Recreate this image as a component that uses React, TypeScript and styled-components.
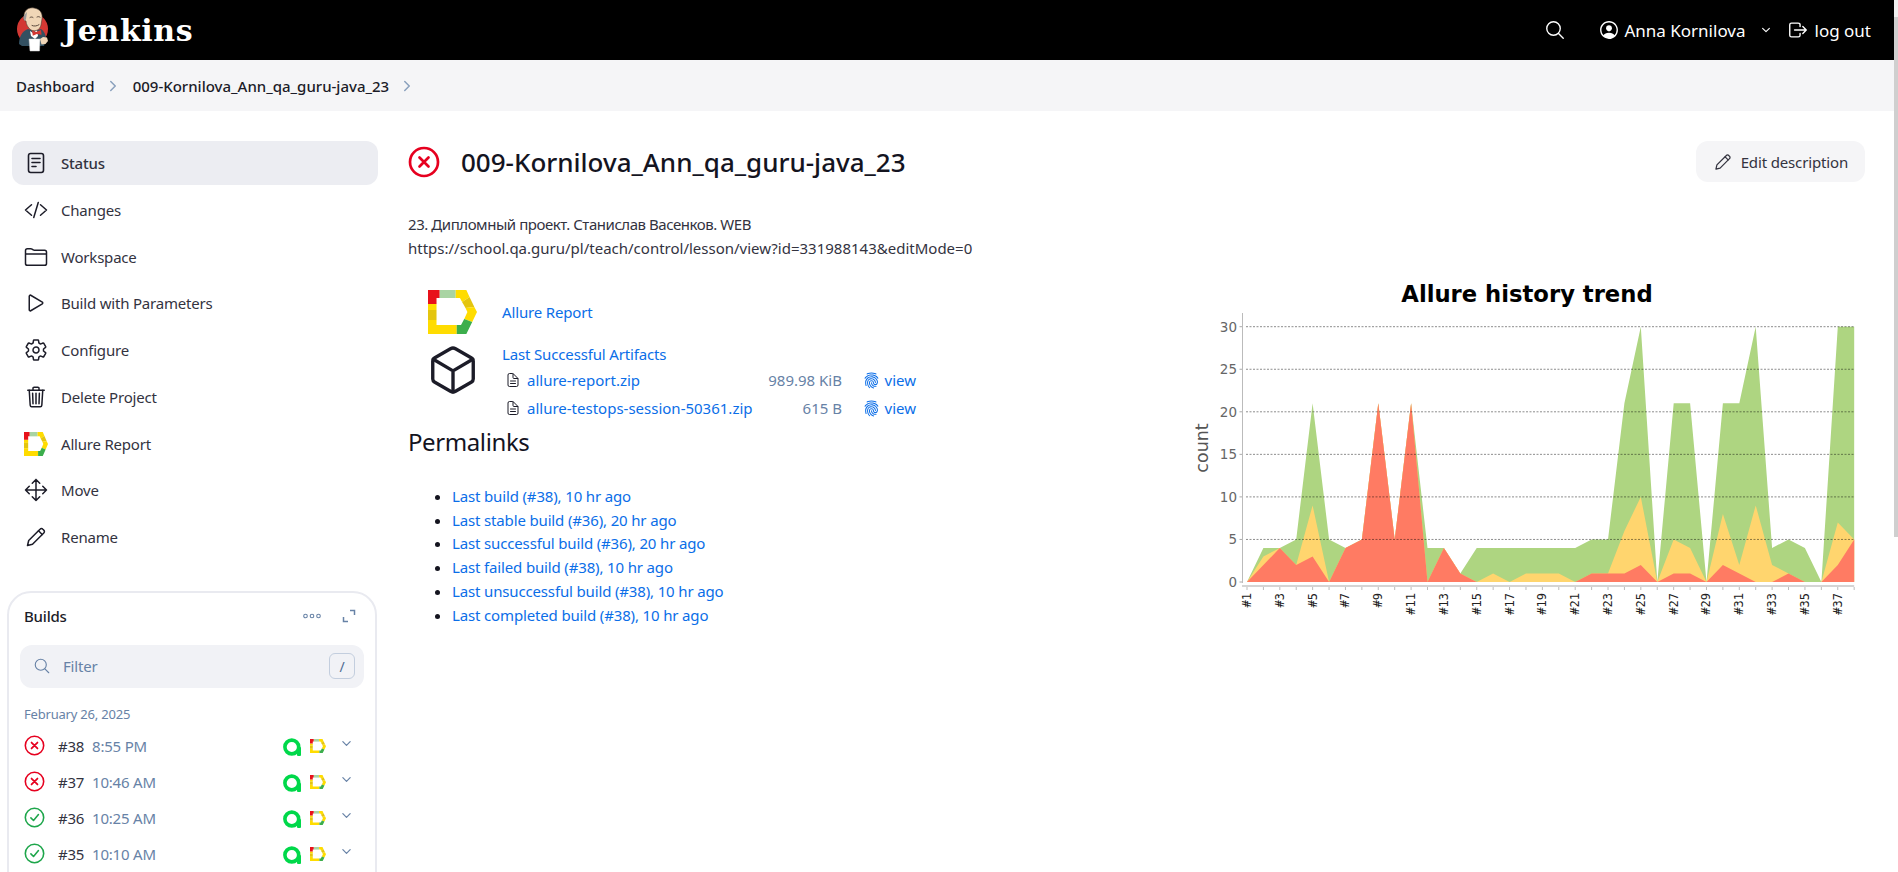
import React from "react";
import styled, { createGlobalStyle } from "styled-components";
import {
    IoChevronDown,
    IoChevronForward,
    IoCodeSlashOutline,
    IoCubeOutline,
    IoDocumentTextOutline,
    IoFingerPrint,
    IoFolderOutline,
    IoLogOutOutline,
    IoMoveOutline,
    IoPersonCircleOutline,
    IoPlayOutline,
    IoSearchOutline,
    IoSettingsOutline,
    IoTrashOutline,
} from "react-icons/io5";

const GlobalStyle = createGlobalStyle`
    html, body {
        margin: 0;
        height: 872px;
        overflow: hidden;
        background: #fff;
    }
    body {
        font-family: "Noto Sans", "Liberation Sans", sans-serif;
        font-size: 15px;
        color: #14141f;
    }
    a { color: #0b6ee8; text-decoration: none; }
`;

const Page = styled.div`
    position: relative;
    display: flex;
    flex-direction: column;
    height: 872px;
    overflow: hidden;
`;

const ScrollThumb = styled.div`
    position: absolute;
    top: 17px;
    right: 0;
    width: 4px;
    height: 520px;
    background: #cfcfcf;
`;

const ScrollCap = styled.div`
    position: absolute;
    top: 0;
    right: 0;
    width: 4px;
    height: 17px;
    background: #f1f1f1;
`;

const Header = styled.header`
    display: flex;
    align-items: center;
    height: 60px;
    flex-shrink: 0;
    padding: 0 27px 0 15px;
    background: #000;
    color: #fff;
`;

const Brand = styled.div`
    display: flex;
    align-items: center;
    gap: 12px;
    margin-right: auto;
`;

const BrandName = styled.span`
    font-family: "DejaVu Serif", "Liberation Serif", serif;
    font-size: 30px;
    font-weight: 700;
    letter-spacing: 0.6px;
`;

const HeaderLink = styled.div`
    display: flex;
    align-items: center;
    gap: 6px;
    font-size: 17px;
`;

const SearchButton = styled(HeaderLink)`
    margin-right: 32px;
`;

const UserLink = styled(HeaderLink)`
    gap: 4px;
    margin-right: 15px;
`;

const UserChevron = styled(IoChevronDown)`
    width: 12px;
    height: 12px;
    margin-left: 10px;
`;

const Breadcrumbs = styled.nav`
    display: flex;
    align-items: center;
    height: 51px;
    flex-shrink: 0;
    padding: 0 16px;
    background: #f5f5f7;
    color: #1c1c28;
    font-weight: 500;
`;

const CrumbArrow = styled(IoChevronForward)`
    width: 16px;
    height: 16px;
    margin: 0 12px 0 10px;
    color: #8aa0bd;
`;

const Body = styled.div`
    display: flex;
    flex: 1;
    min-height: 0;
`;

const SidePanel = styled.aside`
    display: flex;
    flex-direction: column;
    width: 378px;
    flex-shrink: 0;
    padding: 30px 0 0 12px;
    box-sizing: border-box;
`;

const SideItem = styled.div<{ $active?: boolean }>`
    display: flex;
    align-items: center;
    flex-shrink: 0;
    gap: 13px;
    height: 44px;
    margin-bottom: 2.75px;
    padding: 0 12px;
    border-radius: 12px;
    background: ${(props) => (props.$active ? "#ecedf2" : "transparent")};
    font-weight: ${(props) => (props.$active ? 500 : 400)};
    color: #33333f;
    letter-spacing: -0.2px;

    svg {
        width: 24px;
        height: 24px;
        flex-shrink: 0;
        color: #1c1c28;
    }
`;

const BuildsCard = styled.section`
    flex-shrink: 0;
    margin: 29px 1px 0 -5px;
    padding: 11px 11px 80px 11px;
    border: 2px solid #e9eaf0;
    border-radius: 24px;
`;

const BuildsHead = styled.div`
    display: flex;
    align-items: center;
    height: 24px;
    padding-left: 4px;
    font-weight: 500;
    letter-spacing: -0.2px;
    color: #1c1c28;
`;

const BuildsTitle = styled.span`
    margin-right: auto;
`;

const HeadIcon = styled.span`
    display: flex;
    margin-left: 19px;
    margin-right: 3px;
    color: #6782a6;

    & + & {
        margin-left: 18px;
        margin-right: 8px;
    }
`;

const FilterBox = styled.div`
    display: flex;
    align-items: center;
    height: 43px;
    margin-top: 17px;
    padding: 0 9px 0 13px;
    border-radius: 12px;
    background: #f1f2f6;
    color: #6782a6;
    letter-spacing: -0.2px;
`;

const FilterText = styled.span`
    margin-left: 12px;
    margin-right: auto;
`;

const Kbd = styled.span`
    display: flex;
    align-items: center;
    justify-content: center;
    width: 24px;
    height: 24px;
    border: 1px solid #c3cede;
    border-radius: 6px;
    color: #4e6a92;
    font-size: 14px;
`;

const DateLabel = styled.div`
    margin: 16px 0 4px 4px;
    font-size: 13px;
    line-height: 20px;
    color: #6782a6;
    letter-spacing: -0.2px;
`;

const BuildRow = styled.div`
    display: flex;
    align-items: center;
    height: 36px;
    padding-left: 4px;
    letter-spacing: -0.2px;
`;

const BuildNumber = styled.span`
    width: 34px;
    margin-left: 13px;
    color: #33333f;
`;

const BuildTime = styled.span`
    margin-right: auto;
    color: #6782a6;
`;

const RowChevron = styled(IoChevronDown)`
    width: 13px;
    height: 13px;
    margin: -5px 11px 0 14px;
    color: #6782a6;
`;

const Main = styled.main`
    flex: 1;
    min-width: 0;
    padding: 30px 33px 0 30px;
`;

const TitleBar = styled.div`
    display: flex;
    align-items: center;
    box-sizing: border-box;
    height: 44px;
    padding-bottom: 3px;
`;

const PageTitle = styled.h1`
    margin: 0 auto 0 21px;
    font-size: 26px;
    font-weight: 500;
    color: #14141f;
`;

const EditButton = styled.div`
    display: flex;
    align-items: center;
    gap: 8px;
    height: 41px;
    padding: 0 17px;
    border-radius: 12px;
    background: #f5f5f7;
    color: #33333f;
    letter-spacing: -0.15px;

    svg {
        width: 20px;
        height: 20px;
    }
`;

const Columns = styled.div`
    display: flex;
    justify-content: space-between;
`;

const LeftColumn = styled.div`
    width: 720px;
`;

const Description = styled.div`
    margin-top: 27px;
    line-height: 24px;
    color: #33333f;
`;

const DescLine = styled.div<{ $spacing?: number }>`
    letter-spacing: ${(props) => props.$spacing ?? 0}px;
`;

const ActionRow = styled.div`
    display: flex;
    align-items: center;
    margin: 28px 0 0 20px;
    height: 48px;
`;

const ArtifactBlock = styled.div`
    display: flex;
    margin: 8px 0 0 20px;
`;

const CubeIcon = styled(IoCubeOutline)`
    width: 54px;
    height: 54px;
    flex-shrink: 0;
    color: #1c1c28;
    margin: -1px 0 0 -2px;
`;

const LinkSpot = styled.div`
    margin-left: 25px;
    letter-spacing: -0.15px;
`;

const ArtifactHead = styled.div`
    margin-left: 22px;
    line-height: 20px;
    letter-spacing: -0.15px;
`;

const ArtifactTable = styled.div`
    display: grid;
    grid-template-columns: 337px 74px;
    margin: 2px 0 0 25px;
`;

const ArtifactCell = styled.div`
    display: flex;
    align-items: center;
    height: 28px;
`;

const FileIcon = styled(IoDocumentTextOutline)`
    width: 16px;
    height: 16px;
    margin-right: 6px;
    color: #1c1c28;
`;

const FileSize = styled.span`
    margin-left: auto;
    color: #6782a6;
`;

const ViewCell = styled(ArtifactCell)`
    justify-content: flex-end;
    gap: 5px;

    svg {
        color: #0b6ee8;
        width: 17px;
        height: 17px;
    }
`;

const SectionTitle = styled.h2`
    margin: 4px 0 0 0;
    font-size: 24px;
    line-height: 32px;
    font-weight: 400;
    letter-spacing: -0.4px;
    color: #14141f;
`;

const LinkList = styled.ul`
    margin: 27px 0 0 0;
    padding-left: 44px;
    letter-spacing: -0.15px;

    li {
        line-height: 23.7px;
    }
`;

const ChartBox = styled.div`
    width: 680px;
    margin-top: 80px;
`;

const ACCENT_GREEN = "#aed581";
const ACCENT_YELLOW = "#ffd56e";
const ACCENT_RED = "#ff7b63";

const totals = [0, 4, 4, 5, 21, 5, 4, 5, 21, 5, 21, 4, 4, 1, 4, 4, 4, 4, 4, 4, 4, 5, 5, 21, 30, 0, 21, 21, 0, 21, 21, 30, 4, 5, 4, 0, 30, 30];
const middles = [0, 3, 4, 2, 9, 0, 4, 5, 21, 5, 21, 0, 4, 1, 0, 1, 0, 1, 1, 1, 0, 1, 1, 6, 10, 0, 5, 4, 0, 8, 2, 9, 2, 1, 0, 0, 7, 5];
const lows = [0, 2, 4, 2, 3, 0, 4, 5, 21, 5, 21, 0, 4, 1, 0, 0, 0, 0, 0, 0, 0, 1, 1, 1, 2, 0, 1, 1, 0, 2, 1, 0, 0, 1, 0, 0, 2, 5];

const X0 = 62;
const STEP = 16.41;
const Y0 = 317;
const UNIT = 8.51;
const XEND = X0 + 37 * STEP;

const areaPoints = (values: number[]) => {
    const line = values.map((v, i) => `${(X0 + i * STEP).toFixed(1)},${(Y0 - v * UNIT).toFixed(1)}`);
    return `${X0},${Y0} ${line.join(" ")} ${XEND},${Y0}`;
};

const TrendChart = () => (
    <svg width="680" height="400" viewBox="0 0 680 400">
        <text x="342" y="37" textAnchor="middle" fontFamily="DejaVu Sans" fontWeight="700" fontSize="22.7" fill="#000">
            Allure history trend
        </text>
        <polygon points={areaPoints(totals)} fill={ACCENT_GREEN} />
        <polygon points={areaPoints(middles)} fill={ACCENT_YELLOW} />
        <polygon points={areaPoints(lows)} fill={ACCENT_RED} />
        {[0, 5, 10, 15, 20, 25, 30].map((v) => (
            <g key={v}>
                <line x1={54.5} x2={57} y1={Y0 - v * UNIT} y2={Y0 - v * UNIT} stroke="#aaa" />
                {v > 0 && (
                    <line x1={61} x2={XEND} y1={Y0 - v * UNIT} y2={Y0 - v * UNIT} stroke="#000" strokeOpacity="0.45" strokeDasharray="2 1.5" />
                )}
                <text x="52" y={Y0 - v * UNIT + 5} textAnchor="end" fontFamily="DejaVu Sans" fontSize="13.5" fill="#666">
                    {v}
                </text>
            </g>
        ))}
        <line x1="57.5" x2="57.5" y1="48" y2="318" stroke="#bbb" />
        <line x1="57" x2={XEND} y1="321" y2="321" stroke="#d4d4d4" strokeWidth="2" />
        <text transform="rotate(-90 23 183)" x="23" y="183" textAnchor="middle" fontFamily="DejaVu Sans" fontSize="17.5" fill="#555">
            count
        </text>
        {totals.map((_, i) => (
            <g key={i}>
                <line x1={X0 + i * STEP} x2={X0 + i * STEP} y1="322" y2="325" stroke="#bbb" />
                {i % 2 === 0 && (
                    <text
                        transform={`rotate(-90 ${X0 + i * STEP + 4} 328)`}
                        x={X0 + i * STEP + 4}
                        y="328"
                        textAnchor="end"
                        fontFamily="DejaVu Sans Mono"
                        fontSize="12"
                        fill="#222"
                    >
                        #{i + 1}
                    </text>
                )}
            </g>
        ))}
    </svg>
);

const AllureLogo = ({ size }: { size: number }) => (
    <svg width={size} height={(size * 44) / 49} viewBox="0 0 46 44" preserveAspectRatio="none" style={{ flexShrink: 0 }}>
        <polygon points="0,14 8,14 8,20 0,20" fill="#ffdc00" />
        <polygon points="0,20 8,20 8,30 0,30" fill="#e4c50f" />
        <polygon points="0,30 8,30 8,35 27,35 27,44 0,44" fill="#ffdc00" />
        <polygon points="0,0 11,0 11,8 8,8 8,14 0,14" fill="#e8111a" />
        <polygon points="11,0 26,0 26,8 11,8" fill="#a9d4a3" />
        <polygon points="26,0 36,0 39,7 32,12 30,8 26,8" fill="#ffdc00" />
        <polygon points="39,7 43.5,17 35.2,18 32,12" fill="#e4c50f" />
        <polygon points="43.5,17 46,22 41.5,32 34,29 37,22 35.2,18" fill="#ffdc00" />
        <polygon points="41.5,32 36,44 27,44 27,35 31,35 34,29" fill="#3cae4c" />
    </svg>
);

const TestOpsLogo = () => (
    <svg width="18" height="18" viewBox="0 0 18 18" style={{ flexShrink: 0, marginRight: 9, marginTop: 2 }}>
        <circle cx="8.8" cy="9" r="6.9" fill="none" stroke="#00d84a" strokeWidth="3.6" />
        <rect x="14" y="9" width="4" height="9" rx="1" fill="#00d84a" />
    </svg>
);

const StatusIcon = ({ ok, size }: { ok: boolean; size: number }) => (
    <svg width={size} height={size} viewBox="0 0 32 32" style={{ flexShrink: 0 }}>
        <circle cx="16" cy="16" r="14" fill="none" stroke={ok ? "#1ea64b" : "#e6001f"} strokeWidth={size > 24 ? 2.7 : 2.4} />
        {ok ? (
            <path d="M10.5 16.5l4 4 7.5-9" fill="none" stroke="#1ea64b" strokeWidth="2.4" strokeLinecap="round" strokeLinejoin="round" />
        ) : (
            <path d="M11.5 11.5l9 9M20.5 11.5l-9 9" fill="none" stroke="#e6001f" strokeWidth="2.7" strokeLinecap="round" />
        )}
    </svg>
);

const DotsIcon = () => (
    <svg width="18" height="6" viewBox="0 0 18 6" fill="none" stroke="#6782a6" strokeWidth="1.1">
        <circle cx="2.5" cy="3" r="1.8" />
        <circle cx="9" cy="3" r="1.8" />
        <circle cx="15.5" cy="3" r="1.8" />
    </svg>
);

const ExpandIcon = () => (
    <svg width="14" height="14" viewBox="0 0 14 14" fill="none" stroke="#6782a6" strokeWidth="1.5">
        <path d="M8 1.5h4.5V6M1.5 8v4.5H6" />
    </svg>
);

const PencilIcon = () => (
    <svg viewBox="0 0 24 24" fill="none" stroke="currentColor" strokeWidth="1.5" strokeLinejoin="round" strokeLinecap="round">
        <path d="M3.5 20.5l1.2-5L16 4.2a2 2 0 0 1 2.9 0l.9.9a2 2 0 0 1 0 2.9L8.5 19.3z" />
        <path d="M14.5 5.8l3.7 3.7" />
    </svg>
);

const StatusDocIcon = () => (
    <svg viewBox="0 0 24 24" fill="none" stroke="currentColor" strokeWidth="1.6" strokeLinecap="round">
        <rect x="4.5" y="2.5" width="15" height="19" rx="2.2" />
        <path d="M8 7.5h8M8 11.5h8M8 15.5h4" />
    </svg>
);

const JenkinsLogo = () => (
    <svg width="36" height="46" viewBox="0 0 36 46">
        <circle cx="17.5" cy="22" r="15.5" fill="#d33833" />
        <path d="M4 37c0-7 3-13 9-15l6 2 7-2c3 2 5 6 5 10l-2 7H7z" fill="#335061" />
        <path d="M15 24l3 2 4-3 1 6-3 3-4-3z" fill="#fff" />
        <path d="M9 9C9 3 14 0 19 1c6 1 9 5 8 11l-1 6c-1 5-6 7-10 5-3-2-5-6-5-9-2 0-3-3-2-5z" fill="#f0d6b7" stroke="#4a3a30" strokeWidth="0.6" />
        <path d="M9 9c1-2 2-3 3-4l-1 7-1 2c-1-1-2-3-1-5z" fill="#9a9a9a" />
        <path d="M15 10.5c1-.7 2-.7 3 0M22 10c1-.6 2-.5 3 .2M17 18.5c2 1 5 .6 7-.8" fill="none" stroke="#4a3a30" strokeWidth="0.9" strokeLinecap="round" />
        <path d="M17 23.5l4 1.6 5-2 .6 4.6-4.8-.7-4 1.8z" fill="#d33833" />
        <path d="M14 32h11l-.5 12H15z" fill="#fff" stroke="#ccc" strokeWidth="0.5" />
        <path d="M25 32l3-2 4 .6 1 3.4-2.5 3-4 .6z" fill="#f0d6b7" />
    </svg>
);

const sideItems = [
    { label: "Status", icon: <StatusDocIcon />, active: true },
    { label: "Changes", icon: <IoCodeSlashOutline /> },
    { label: "Workspace", icon: <IoFolderOutline /> },
    { label: "Build with Parameters", icon: <IoPlayOutline /> },
    { label: "Configure", icon: <IoSettingsOutline /> },
    { label: "Delete Project", icon: <IoTrashOutline /> },
    { label: "Allure Report", icon: <AllureLogo size={23} /> },
    { label: "Move", icon: <IoMoveOutline /> },
    { label: "Rename", icon: <PencilIcon /> },
];

const builds = [
    { id: "#38", time: "8:55 PM", ok: false },
    { id: "#37", time: "10:46 AM", ok: false },
    { id: "#36", time: "10:25 AM", ok: true },
    { id: "#35", time: "10:10 AM", ok: true },
];

const permalinks = [
    "Last build (#38), 10 hr ago",
    "Last stable build (#36), 20 hr ago",
    "Last successful build (#36), 20 hr ago",
    "Last failed build (#38), 10 hr ago",
    "Last unsuccessful build (#38), 10 hr ago",
    "Last completed build (#38), 10 hr ago",
];

const artifacts = [
    { name: "allure-report.zip", size: "989.98 KiB" },
    { name: "allure-testops-session-50361.zip", size: "615 B" },
];

const App = () => {
    return (
        <Page>
            <GlobalStyle />
            <Header>
                <Brand>
                    <JenkinsLogo />
                    <BrandName>Jenkins</BrandName>
                </Brand>
                <SearchButton>
                    <IoSearchOutline size={22} />
                </SearchButton>
                <UserLink>
                    <IoPersonCircleOutline size={22} />
                    Anna Kornilova
                    <UserChevron />
                </UserLink>
                <HeaderLink>
                    <IoLogOutOutline size={22} />
                    log out
                </HeaderLink>
            </Header>
            <Breadcrumbs>
                Dashboard
                <CrumbArrow />
                009-Kornilova_Ann_qa_guru-java_23
                <CrumbArrow />
            </Breadcrumbs>
            <Body>
                <SidePanel>
                    {sideItems.map((item) => (
                        <SideItem key={item.label} $active={item.active}>
                            {item.icon}
                            {item.label}
                        </SideItem>
                    ))}
                    <BuildsCard>
                        <BuildsHead>
                            <BuildsTitle>Builds</BuildsTitle>
                            <HeadIcon>
                                <DotsIcon />
                            </HeadIcon>
                            <HeadIcon>
                                <ExpandIcon />
                            </HeadIcon>
                        </BuildsHead>
                        <FilterBox>
                            <IoSearchOutline size={18} />
                            <FilterText>Filter</FilterText>
                            <Kbd>/</Kbd>
                        </FilterBox>
                        <DateLabel>February 26, 2025</DateLabel>
                        {builds.map((build) => (
                            <BuildRow key={build.id}>
                                <StatusIcon ok={build.ok} size={21} />
                                <BuildNumber>{build.id}</BuildNumber>
                                <BuildTime>{build.time}</BuildTime>
                                <TestOpsLogo />
                                <AllureLogo size={16} />
                                <RowChevron />
                            </BuildRow>
                        ))}
                    </BuildsCard>
                </SidePanel>
                <Main>
                    <TitleBar>
                        <StatusIcon ok={false} size={32} />
                        <PageTitle>009-Kornilova_Ann_qa_guru-java_23</PageTitle>
                        <EditButton>
                            <PencilIcon />
                            Edit description
                        </EditButton>
                    </TitleBar>
                    <Columns>
                        <LeftColumn>
                            <Description>
                                <DescLine $spacing={-0.45}>23. Дипломный проект. Станислав Васенков. WEB</DescLine>
                                <DescLine>https://school.qa.guru/pl/teach/control/lesson/view?id=331988143&amp;editMode=0</DescLine>
                            </Description>
                            <ActionRow>
                                <AllureLogo size={49} />
                                <LinkSpot>
                                    <a href="#allure">Allure Report</a>
                                </LinkSpot>
                            </ActionRow>
                            <ArtifactBlock>
                                <CubeIcon />
                                <div>
                                    <ArtifactHead>
                                        <a href="#artifacts">Last Successful Artifacts</a>
                                    </ArtifactHead>
                                    <ArtifactTable>
                                        {artifacts.map((file) => (
                                            <React.Fragment key={file.name}>
                                                <ArtifactCell>
                                                    <FileIcon />
                                                    <a href="#file">{file.name}</a>
                                                    <FileSize>{file.size}</FileSize>
                                                </ArtifactCell>
                                                <ViewCell>
                                                    <IoFingerPrint />
                                                    <a href="#view">view</a>
                                                </ViewCell>
                                            </React.Fragment>
                                        ))}
                                    </ArtifactTable>
                                </div>
                            </ArtifactBlock>
                            <SectionTitle>Permalinks</SectionTitle>
                            <LinkList>
                                {permalinks.map((link) => (
                                    <li key={link}>
                                        <a href="#permalink">{link}</a>
                                    </li>
                                ))}
                            </LinkList>
                        </LeftColumn>
                        <ChartBox>
                            <TrendChart />
                        </ChartBox>
                    </Columns>
                </Main>
            </Body>
            <ScrollCap />
            <ScrollThumb />
        </Page>
    );
};

export default App;
